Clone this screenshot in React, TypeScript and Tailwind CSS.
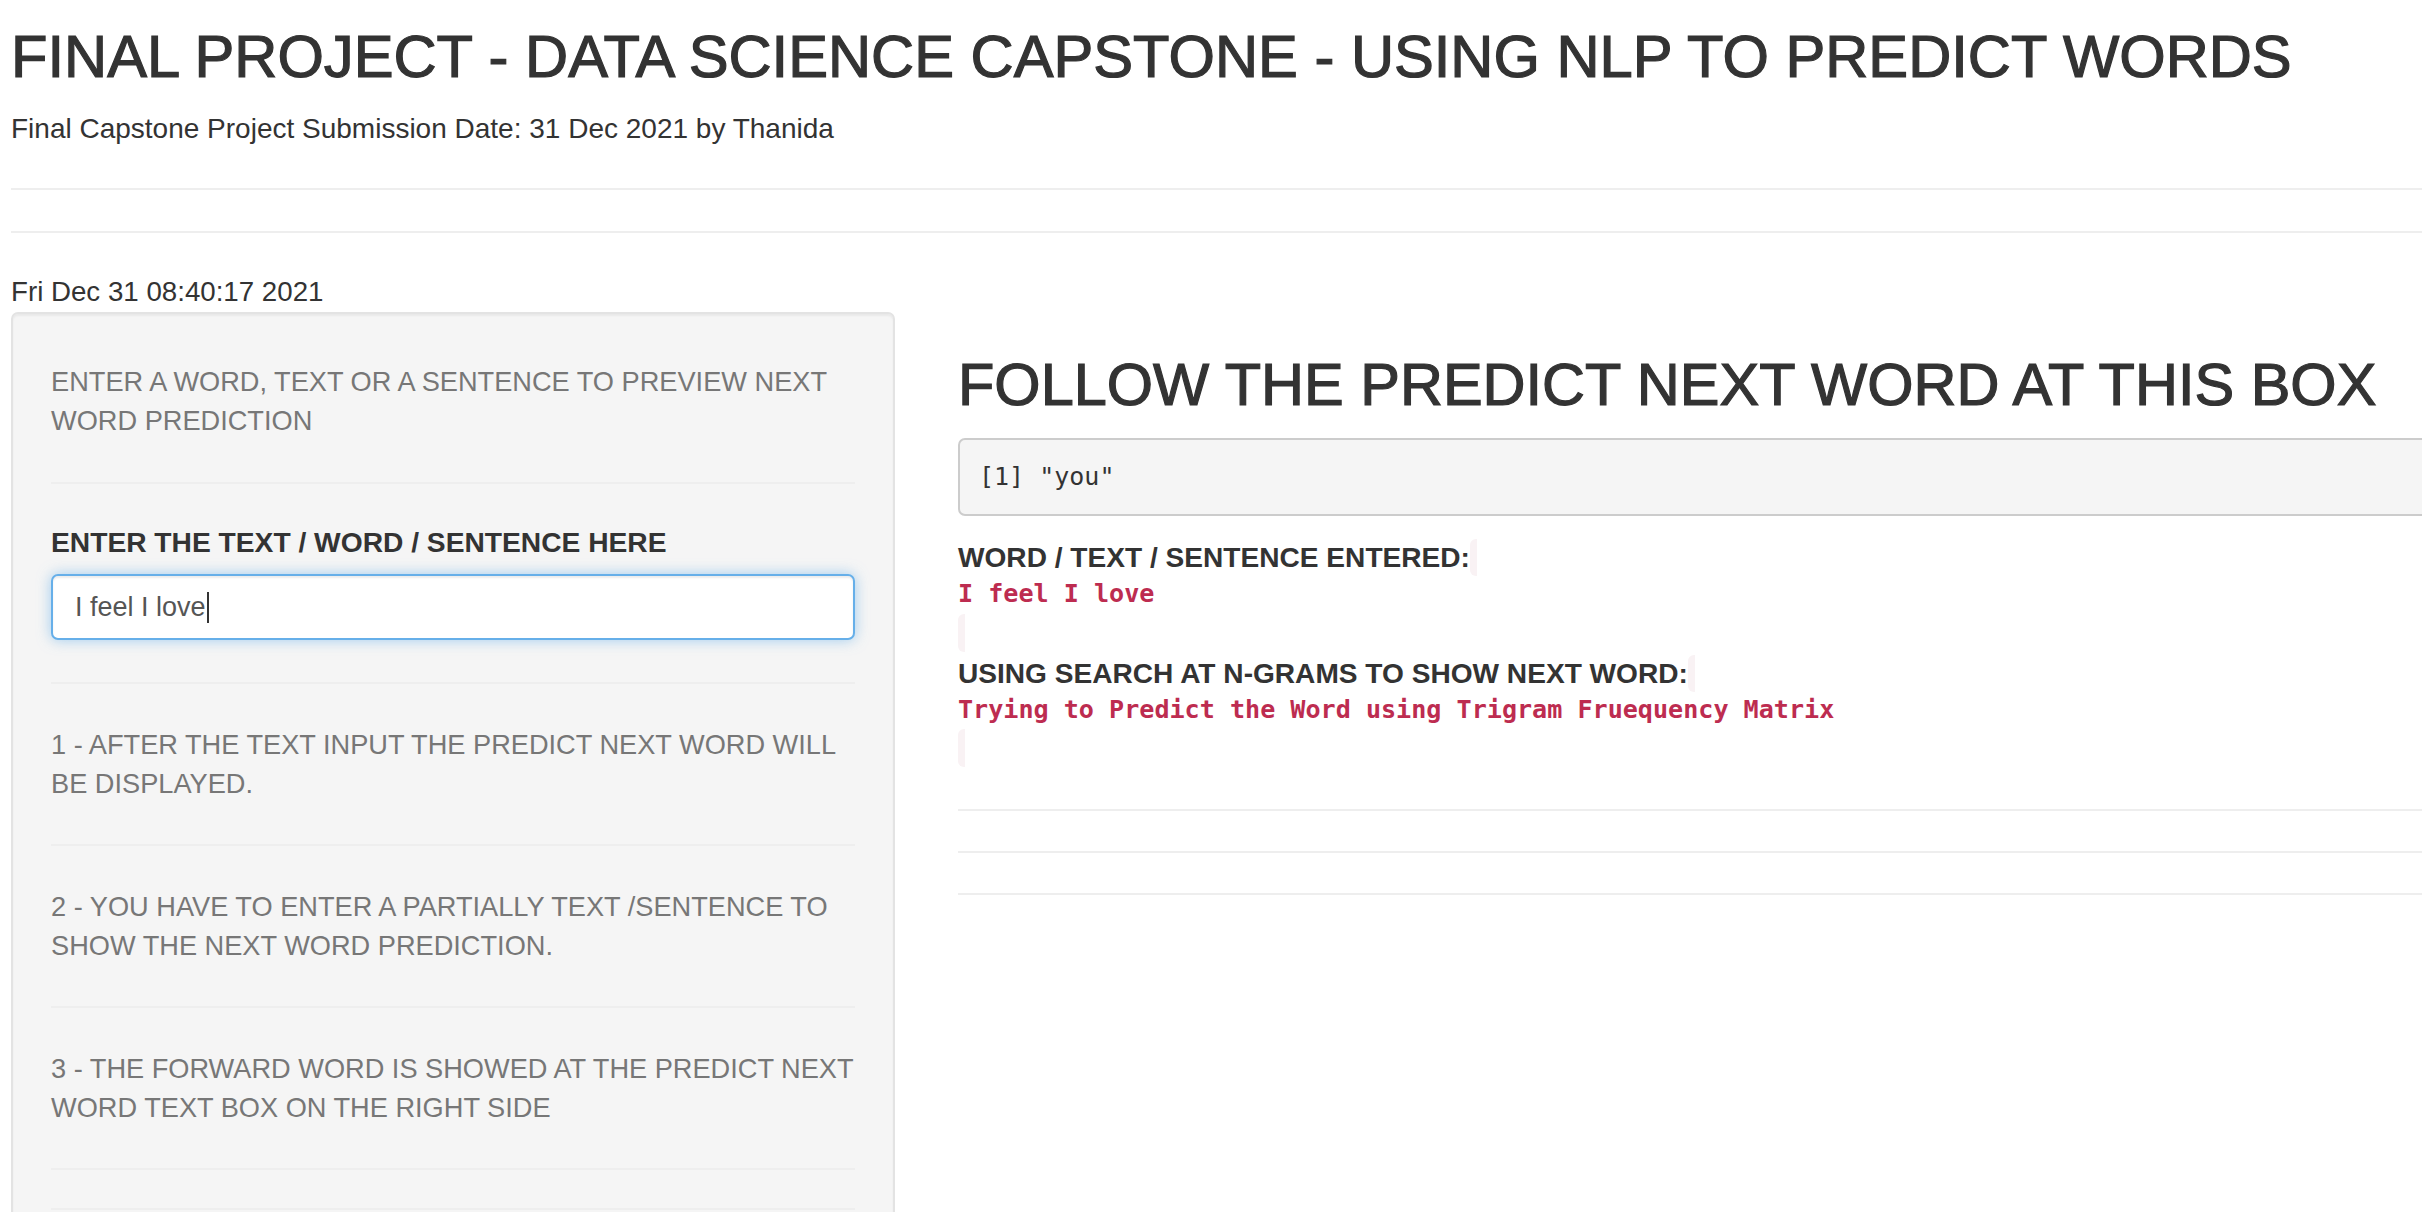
const notes = [
  ["1 - AFTER THE TEXT INPUT THE PREDICT NEXT WORD WILL", "BE DISPLAYED."],
  ["2 - YOU HAVE TO ENTER A PARTIALLY TEXT /SENTENCE TO", "SHOW THE NEXT WORD PREDICTION."],
  ["3 - THE FORWARD WORD IS SHOWED AT THE PREDICT NEXT", "WORD TEXT BOX ON THE RIGHT SIDE"],
];

function Rule() {
  return <div className="h-[2px] bg-[#eeeeee]" />;
}

function Muted({ lines }: { lines: string[] }) {
  return (
    <p className="text-[27.2px] leading-[39px] text-[#777777]">
      {lines[0]}
      <br />
      {lines[1]}
    </p>
  );
}

function OutputBlock({ label, value }: { label: string; value: string }) {
  return (
    <div>
      <div className="h-[37px] whitespace-nowrap text-[28.1px] font-bold leading-[37px]">
        {label}
        <span className="inline-block h-[37px] w-[7px] rounded-l-[6px] bg-[#f9f2f4] align-top" />
      </div>
      <div className="h-[35px] whitespace-nowrap font-['DejaVu_Sans_Mono',Menlo,monospace] text-[25.1px] font-bold leading-[35px] text-[#bd2c50]">
        {value}
      </div>
      <div className="h-[43.7px] pt-[2.7px]">
        <span className="block h-[38px] w-[7px] rounded-l-[6px] bg-[#f9f2f4]" />
      </div>
    </div>
  );
}

export default function App() {
  return (
    <div className="min-h-screen w-full overflow-hidden bg-white font-['Liberation_Sans',Arial,sans-serif] text-[#333333]">
      <div className="w-[2480px] pl-[11px]">
        <h1 className="pt-[24px] text-[59.7px] font-normal leading-[66px] [-webkit-text-stroke:1.2px_#333333]">
          FINAL PROJECT - DATA SCIENCE CAPSTONE - USING NLP TO PREDICT WORDS
        </h1>
        <p className="mt-[19px] text-[28px] leading-[40px]">
          Final Capstone Project Submission Date: 31 Dec 2021 by Thanida
        </p>
        <div className="mt-[39px]">
          <Rule />
        </div>
        <div className="mt-[41px]">
          <Rule />
        </div>
        <p className="mt-[39px] text-[27.7px] leading-[40px]">Fri Dec 31 08:40:17 2021</p>

        <div className="flex items-start">
          <aside className="min-h-[950px] w-[884px] shrink-0 rounded-[7px] border-2 border-[#e3e3e3] bg-[#f5f5f5] px-[38px] pt-[48px] shadow-[inset_0_2px_2px_rgba(0,0,0,0.05)]">
            <Muted lines={["ENTER A WORD, TEXT OR A SENTENCE TO PREVIEW NEXT", "WORD PREDICTION"]} />
            <div className="mt-[42px]">
              <Rule />
            </div>
            <label className="mt-[39px] block text-[28.2px] font-bold leading-[39px]">
              ENTER THE TEXT / WORD / SENTENCE HERE
            </label>
            <div className="mt-[12px] flex h-[66px] items-center rounded-[7px] border-2 border-[#66afe9] bg-white pl-[22px] text-[27px] text-[#555555] shadow-[inset_0_2px_2px_rgba(0,0,0,0.075),0_0_14px_rgba(102,175,233,0.6)]">
              I feel I love
              <span className="ml-[1px] inline-block h-[31px] w-[2px] bg-[#333333]" />
            </div>
            <div className="mt-[42px]">
              <Rule />
            </div>
            {notes.map((n) => (
              <div key={n[0]}>
                <div className="my-[41px]">
                  <Muted lines={n} />
                </div>
                <Rule />
              </div>
            ))}
            <div className="mt-[38px]">
              <Rule />
            </div>
          </aside>

          <main className="ml-[63px] flex-1">
            <h1 className="mt-[40px] whitespace-nowrap text-[59.5px] font-normal leading-[66px] [-webkit-text-stroke:1.2px_#333333]">
              FOLLOW THE PREDICT NEXT WORD AT THIS BOX
            </h1>
            <pre className="mt-[20px] rounded-[7px] border-2 border-[#cccccc] bg-[#f5f5f5] px-[19px] py-[19px] font-['DejaVu_Sans_Mono',Menlo,monospace] text-[25px] leading-[36px] text-[#333333]">
              [1] "you"
            </pre>
            <div className="mt-[23px]">
              <OutputBlock label="WORD / TEXT / SENTENCE ENTERED:" value="I feel I love" />
              <OutputBlock
                label="USING SEARCH AT N-GRAMS TO SHOW NEXT WORD:"
                value="Trying to Predict the Word using Trigram Fruequency Matrix"
              />
            </div>
            <div className="mt-[39px]">
              <Rule />
            </div>
            <div className="mt-[40px]">
              <Rule />
            </div>
            <div className="mt-[40px]">
              <Rule />
            </div>
          </main>
        </div>
      </div>
    </div>
  );
}
